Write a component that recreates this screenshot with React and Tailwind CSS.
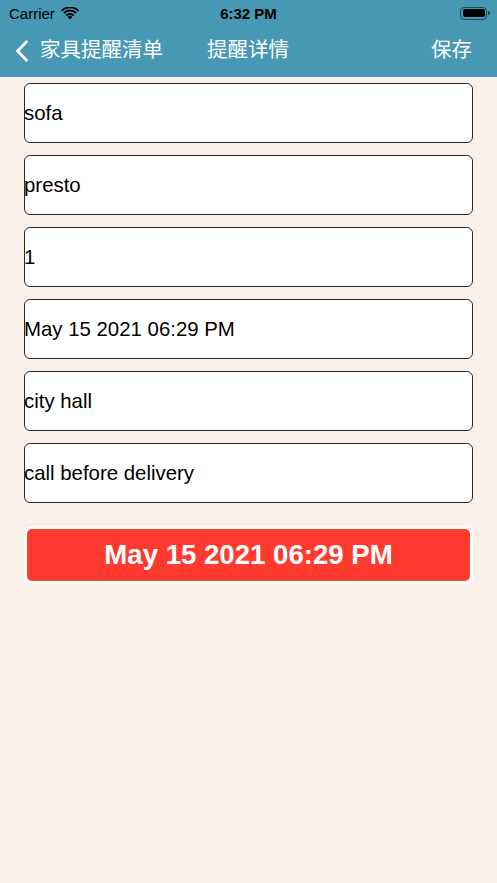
import React from "react";

const fields = ["sofa", "presto", "1", "May 15 2021 06:29 PM", "city hall", "call before delivery"];

export default function App() {
  return (
    <div
      className="w-[497px] h-[883px] bg-[#f9f0ea] flex flex-col"
      style={{ fontFamily: '"Liberation Sans", "Noto Sans CJK SC", Arial, sans-serif' }}
    >
      <div className="bg-[#4698b4] h-[77px] flex flex-col text-white">
        <div className="h-[26px] flex items-center justify-between px-[9px] text-black relative">
          <div className="flex items-center gap-[6px] text-[15px] leading-none pt-[1px]">
            <span>Carrier</span>
            <svg width="18" height="13" viewBox="0 0 18 13">
              <path d="M9 12.5 L6.6 9.9 A3.4 3.4 0 0 1 11.4 9.9 Z" fill="black" />
              <path d="M4.6 7.8 A6.3 6.3 0 0 1 13.4 7.8 L12.1 9.2 A4.4 4.4 0 0 0 5.9 9.2 Z" fill="black" />
              <path d="M2.2 5.4 A9.7 9.7 0 0 1 15.8 5.4 L14.5 6.8 A7.8 7.8 0 0 0 3.5 6.8 Z" fill="black" />
              <path d="M0 3.1 A12.8 12.8 0 0 1 18 3.1 L16.7 4.5 A10.9 10.9 0 0 0 1.3 4.5 Z" fill="black" />
            </svg>
          </div>
          <div className="absolute left-0 right-0 text-center text-[15px] font-bold leading-none pt-[1px] pointer-events-none">
            6:32 PM
          </div>
          <div className="flex items-center mr-[-2px]">
            <div className="w-[27px] h-[13px] rounded-[4px] border border-[#1d4a5a] p-[1.5px] flex">
              <div className="flex-1 bg-black rounded-[2px]" />
            </div>
            <div className="w-[2px] h-[4px] bg-[#1d4a5a] rounded-r-sm ml-[1px]" />
          </div>
        </div>
        <div className="flex-1 flex items-center relative pb-[2px]">
          <div className="flex items-center pl-[15px] gap-[11px]">
            <svg width="14" height="22" viewBox="0 0 14 22" fill="none">
              <path d="M11.5 1.8 L2.5 11 L11.5 20.2" stroke="white" strokeWidth="2.8" strokeLinecap="round" strokeLinejoin="round" />
            </svg>
            <span className="text-[20.5px] leading-none">家具提醒清单</span>
          </div>
          <div className="absolute left-[207px] text-[20.5px] leading-none">提醒详情</div>
          <div className="ml-auto mr-[25px] text-[20.5px] leading-none">保存</div>
        </div>
      </div>

      <div className="px-[24px] pt-[6px] flex flex-col gap-[12px]">
        {fields.map((f, i) => (
          <div
            key={i}
            className="h-[60px] bg-white border-[1.5px] border-[#2a2a2a] rounded-[6px] flex items-center text-[20.4px] text-black leading-none"
          >
            <span className="-ml-[1px]">{f}</span>
          </div>
        ))}
        <div className="mt-[11px] h-[58px] rounded-[7px] bg-white p-[3px] flex">
          <div className="flex-1 rounded-[5px] bg-[#ff3b30] flex items-center justify-center text-white font-bold text-[27.6px] leading-none">
            May 15 2021 06:29 PM
          </div>
        </div>
      </div>
    </div>
  );
}
